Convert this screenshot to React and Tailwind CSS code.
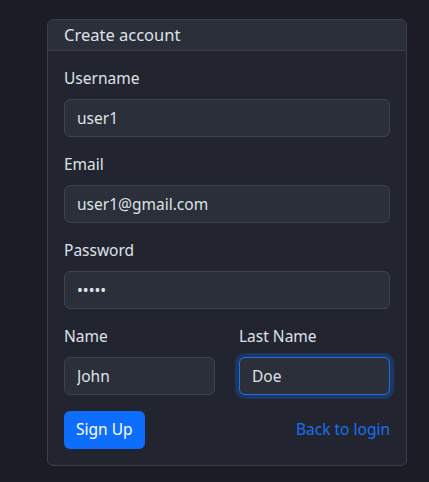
import React from 'react';

const font = { fontFamily: '"Noto Sans", "Open Sans", sans-serif' };

const Field = ({ label, value, type = 'text', focused = false }) => (
  <div className="flex flex-col">
    <label className="text-[15.5px] leading-[22px] pb-[2px] text-[#dee2e6] mb-2">{label}</label>
    <input
      type={type}
      value={value}
      readOnly
      className={`h-[38px] w-full rounded-md bg-[#2b2f3a] px-3 text-[15.5px] text-[#dee2e6] outline-none border ${
        focused
          ? 'border-[#1f6fe6] shadow-[0_0_0_4px_rgba(13,110,253,0.25)]'
          : 'border-[#3d424f]'
      }`}
    />
  </div>
);

const App = () => {
  return (
    <div className="min-h-[482px] bg-[#1b1c26] pt-[19px] pl-[47px]" style={font}>
      <div className="w-[360px] rounded-md border border-[#3a3e4a] bg-[#222530] overflow-hidden">
        {/* Header */}
        <div className="bg-[#2b2f3a] border-b border-[#3a3e4a] px-4 py-[3px] text-[16.5px] leading-6 text-[#dee2e6]">
          Create account
        </div>

        {/* Body */}
        <div className="p-4 flex flex-col gap-4">
          <Field label="Username" value="user1" />
          <Field label="Email" value="user1@gmail.com" />
          <Field label="Password" value="12345" type="password" />
          <div className="grid grid-cols-2 gap-6">
            <Field label="Name" value="John" />
            <Field label="Last Name" value="Doe" focused />
          </div>
          <div className="flex items-center justify-between">
            <button className="h-[38px] rounded-md bg-[#0d6efd] px-3 text-[15.5px] text-white">
              Sign Up
            </button>
            <a href="#" className="text-[15.5px] text-[#1b6ef0]">Back to login</a>
          </div>
        </div>
      </div>
    </div>
  );
};

export default App;
